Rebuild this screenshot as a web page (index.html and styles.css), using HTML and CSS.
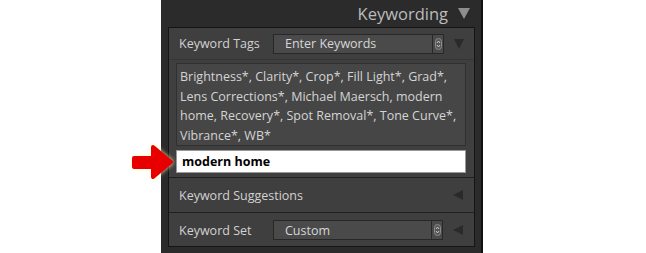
FILE: index.html
```html
<!DOCTYPE html>
<html lang="en">
<head>
    <meta charset="UTF-8">
    <title>Keywording</title>
    <link rel="stylesheet" href="styles.css">
</head>
<body>
    <div class="stage">
        <svg class="pointer" width="50" height="40" viewBox="0 0 50 40">
            <path d="M5 15 L24 15 L24 4 L42 19 L24 34 L24 24 L5 24 Z" fill="#e80000" stroke="#e80000" stroke-width="4" stroke-linejoin="round" stroke-linecap="round"/>
        </svg>

        <div class="panel">
            <div class="panel-title">Keywording <span class="caret down"></span></div>

            <div class="panel-body">
                <div class="row">
                    <span class="label">Keyword Tags</span>
                    <div class="select">
                        <span class="value">Enter Keywords</span>
                        <span class="stepper">
                            <svg width="7" height="12" viewBox="0 0 7 12">
                                <rect x="0.5" y="0.5" width="6" height="11" rx="3" fill="#555" stroke="#8c8c8c"/>
                                <path d="M2 5 L3.5 3 L5 5 M2 7 L3.5 9 L5 7" fill="none" stroke="#c8c8c8" stroke-width="1"/>
                            </svg>
                        </span>
                    </div>
                    <span class="caret down small"></span>
                </div>

                <div class="tags-block">
                    <div class="tags">
                        <span>Brightness*, Clarity*, Crop*, Fill Light*, Grad*,</span>
                        <span>Lens Corrections*, Michael Maersch, modern</span>
                        <span>home, Recovery*, Spot Removal*, Tone Curve*,</span>
                        <span>Vibrance*, WB*</span>
                    </div>
                    <div class="entry">modern home</div>
                </div>

                <div class="row section">
                    <span class="label wide">Keyword Suggestions</span>
                    <span class="caret left"></span>
                </div>

                <div class="row section">
                    <span class="label">Keyword Set</span>
                    <div class="select">
                        <span class="value">Custom</span>
                        <span class="stepper">
                            <svg width="7" height="12" viewBox="0 0 7 12">
                                <rect x="0.5" y="0.5" width="6" height="11" rx="3" fill="#555" stroke="#8c8c8c"/>
                                <path d="M2 5 L3.5 3 L5 5 M2 7 L3.5 9 L5 7" fill="none" stroke="#c8c8c8" stroke-width="1"/>
                            </svg>
                        </span>
                    </div>
                    <span class="caret left"></span>
                </div>
            </div>
        </div>
    </div>
</body>
</html>
```

FILE: styles.css
```css
body {
    margin: 0;
    background: #fff;
    font-family: "Open Sans", "Lato", sans-serif;
}

.stage {
    position: relative;
    width: 646px;
    height: 253px;
    overflow: hidden;
}

.pointer {
    position: absolute;
    left: 129px;
    top: 143px;
    filter: drop-shadow(0 0 2px rgba(255, 255, 190, 0.9));
}

.panel {
    margin-left: 161px;
    width: 320px;
    height: 253px;
    background: #2b2b2b;
    border-right: 2px solid #111;
}

.panel-title {
    height: 27px;
    display: flex;
    align-items: center;
    justify-content: flex-end;
    gap: 10px;
    padding-right: 11px;
    color: #bcbcbc;
    font-size: 16.5px;
}

.panel-body {
    margin: 0 6px 0 7px;
    height: 218px;
    background: #3f3f3f;
    border: 1px solid #151515;
}

.row {
    display: flex;
    align-items: center;
    height: 31px;
    padding: 0 10px;
    color: #d2d2d2;
    font-size: 12.5px;
}

.row .label {
    width: 94px;
    flex: none;
}

.row .label.wide {
    width: auto;
}

.section {
    height: 34px;
    border-top: 1px solid #1f1f1f;
}

.select {
    display: flex;
    align-items: center;
    width: 172px;
    height: 18px;
    margin-right: 10px;
    background: #4a4a4a;
    border: 1px solid #282828;
    color: #d6d6d6;
}

.select .value {
    flex: 1;
    padding-left: 11px;
}

.stepper {
    display: flex;
    align-items: center;
    justify-content: center;
    width: 10px;
    height: 18px;
    border-left: 1px solid #282828;
}

.caret {
    display: inline-block;
    width: 0;
    height: 0;
}

.caret.down {
    border-left: 6px solid transparent;
    border-right: 6px solid transparent;
    border-top: 11px solid #8e8e8e;
}

.caret.down.small {
    border-left-width: 5px;
    border-right-width: 5px;
    border-top: 10px solid #2a2a2a;
}

.caret.left {
    margin-left: auto;
    margin-right: 1px;
    border-top: 5px solid transparent;
    border-bottom: 5px solid transparent;
    border-right: 10px solid #2a2a2a;
}

.tags-block {
    border-top: 1px solid #353535;
    padding: 3px 8px 4px 7px;
}

.tags {
    height: 73px;
    padding: 3px 2px 5px 3px;
    background: #464646;
    border: 1px solid #303030;
    color: #d4d4d4;
    font-size: 12.5px;
    line-height: 19.5px;
}

.tags span {
    display: block;
    white-space: nowrap;
}

.entry {
    margin-top: 4px;
    height: 21px;
    line-height: 21px;
    padding-left: 5px;
    background: #fff;
    border: 1px solid #999;
    color: #000;
    font-size: 12.5px;
    font-weight: bold;
}
```
